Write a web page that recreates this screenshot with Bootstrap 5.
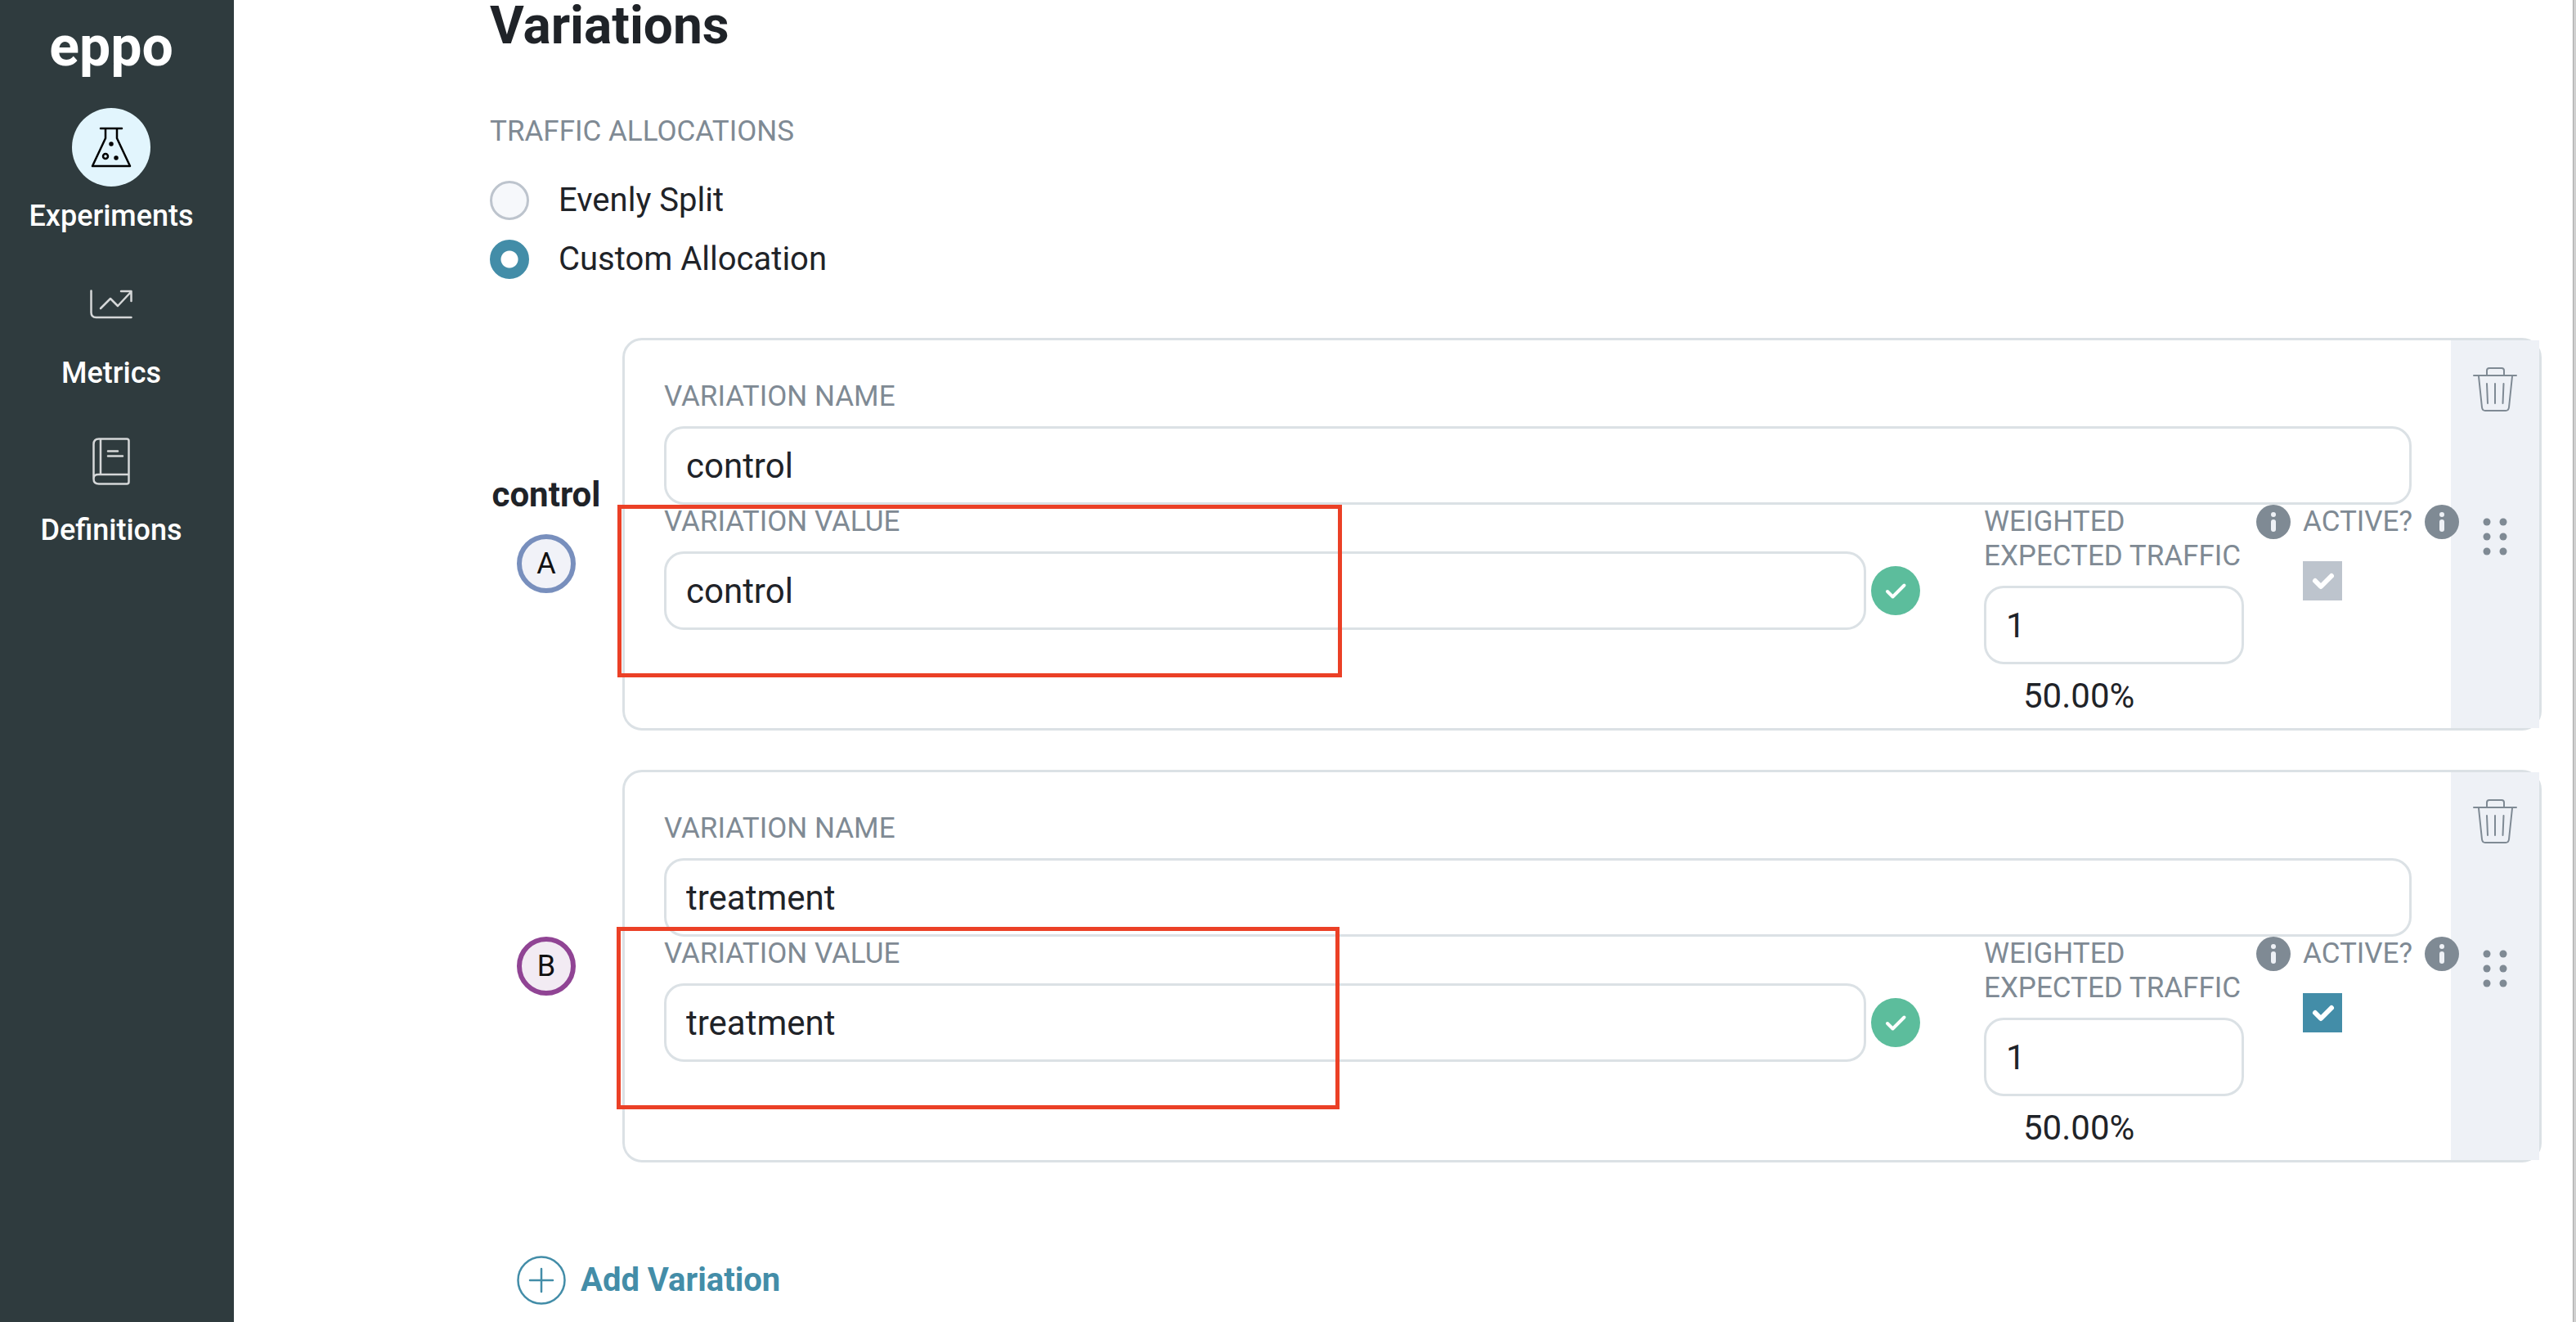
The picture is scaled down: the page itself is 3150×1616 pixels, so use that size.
<!DOCTYPE html>
<html lang="en">
<head>
<meta charset="utf-8">
<meta name="viewport" content="width=device-width, initial-scale=1">
<title>Eppo – Variations</title>
<link href="https://cdn.jsdelivr.net/npm/bootstrap@5.3.0/dist/css/bootstrap.min.css" rel="stylesheet">
<style>
  :root { --ink: #1f2328; --muted: #7f8a94; --line: #dbe1e5; --teal: #438da8; --panel: #eef1f6; --alert: #eb4026; }
  body { font-family: Roboto, "Liberation Sans", sans-serif; font-size: 40px; line-height: 48px; color: var(--ink); background: #fff; }
  .sidebar { flex: 0 0 286px; padding: 24px 14px 24px 0; background: #2f3b3e; }
  .brand { font-size: 68px; line-height: 66px; font-weight: 700; color: #fff; margin-bottom: 42px; }
  .side-nav { gap: 39px; }
  .side-link { gap: 15px; font-size: 36px; line-height: 42px; font-weight: 500; color: #fff; }
  .side-icon { width: 96px; height: 96px; }
  .side-link.active .side-icon { background: #e2f5fd; }
  .content { padding: 0 38px 21px 313px; min-width: 0; }
  .page-title { font-size: 64px; line-height: 64px; font-weight: 700; margin-bottom: 76px; }
  .caption { display: block; font-size: 35px; line-height: 42px; font-weight: 400; color: var(--muted); text-transform: uppercase; margin: 0; }
  .options { padding: 39px 0 72px; gap: 24px; }
  .option { gap: 36px; }
  .option .form-check-input { width: 48px; height: 48px; margin: 0; border: 3px solid #bdc4cd; background-color: #f6f8fb; }
  .option .form-check-input:checked { border-color: var(--teal); background: radial-gradient(circle, #fff 10px, var(--teal) 11px) border-box; }
  .variations { gap: 48px; }
  .tag { flex: 0 0 138px; margin-right: 24px; gap: 24px; font-size: 42px; font-weight: 700; }
  .letter { width: 72px; height: 72px; border: 6px solid; font-size: 36px; font-weight: 400; }
  .letter-a { border-color: #788fbd; background: #f1f2f8; }
  .letter-b { border-color: #904494; background: #f2ebf3; }
  .letter span { color: #111; }
  .variation { border: 3px solid var(--line); border-radius: 24px; min-width: 0; }
  .fields { padding: 48px 48px 15px; min-width: 0; }
  .fields .form-control { height: 96px; margin-top: 15px; padding: 0 24px; border: 3px solid var(--line); border-radius: 24px; font-size: 42px; line-height: 48px; color: var(--ink); }
  .value-col { margin-right: 78px; }
  .valid-row { gap: 6px; }
  .valid-row svg { flex: none; margin-top: 15px; }
  .weight-col { gap: 15px; margin-right: 15px; }
  .weight-field { width: 318px; }
  .share { margin-top: 15px; padding-left: 48px; font-size: 42px; }
  .active-col { width: 133px; z-index: 1; }
  .active-head { gap: 15px; width: max-content; }
  .active-col .form-check-input { display: block; width: 48px; height: 48px; margin: 27px 0 0; border: 0; border-radius: 0; opacity: 1; background-size: 48px 48px; }
  .active-col .form-check-input:checked { background-color: var(--teal); background-image: url("data:image/svg+xml,%3csvg xmlns='http://www.w3.org/2000/svg' viewBox='0 0 48 48'%3e%3cpath fill='none' stroke='%23fff' stroke-width='6' stroke-linecap='round' stroke-linejoin='round' d='M15 24l7 7 13-13'/%3e%3c/svg%3e"); }
  .active-col .form-check-input:disabled { background-color: #bdc4cd; }
  .handle { flex: 0 0 108px; background: var(--panel); padding-top: 30px; }
  .icon-btn { border: 0; background: none; padding: 0; display: block; line-height: 0; }
  .grip { margin-top: 127px; }
  .highlight { position: absolute; border: 5px solid var(--alert); pointer-events: none; z-index: 2; }
  .highlight-a { left: -9px; top: 201px; width: 886px; height: 211px; }
  .highlight-b { left: -10px; top: 189px; width: 884px; height: 223px; }
  .add-btn { margin: 114px 0 0 33px; gap: 18px; font-weight: 700; color: var(--teal); }
  .scroll-edge { flex: 0 0 4px; background: #d0d0d0; border-left: 1px solid #a8a8a8; }
</style>
<script src="https://cdn.jsdelivr.net/npm/bootstrap@5.3.0/dist/js/bootstrap.bundle.min.js"></script>
</head>
<body>
<svg class="d-none" aria-hidden="true">
  <symbol id="info" viewBox="0 0 42 42"><circle cx="21" cy="21" r="21" fill="#7f8a94"/><circle cx="21" cy="12" r="3" fill="#eef1f6"/><rect x="18" y="18" width="6" height="15" rx="3" fill="#eef1f6"/></symbol>
  <symbol id="valid" viewBox="0 0 60 60"><circle cx="30" cy="30" r="30" fill="#5cbd9c"/><path d="M20 31l6.500 6.500L40.500 23.500" fill="none" stroke="#fff" stroke-width="4" stroke-linecap="round" stroke-linejoin="round"/></symbol>
  <symbol id="trash" viewBox="0 0 54 54"><g fill="none" stroke="#7f8a94" stroke-width="2" stroke-linecap="round" stroke-linejoin="round"><path d="M1 10h52M17 10V4q0-3 3-3h15q3 0 3 3v6M7 11l4 38q.500 4 4 4h25q3.500 0 4-4l4-38M17 20l1 24M27 20v24M37.500 20l-1 24"/></g></symbol>
  <symbol id="dots" viewBox="0 0 30 46"><g fill="#7f8a94"><circle cx="5" cy="5" r="4.500"/><circle cx="25" cy="5" r="4.500"/><circle cx="5" cy="23" r="4.500"/><circle cx="25" cy="23" r="4.500"/><circle cx="5" cy="41" r="4.500"/><circle cx="25" cy="41" r="4.500"/></g></symbol>
</svg>

<div class="d-flex min-vh-100">
  <aside class="sidebar d-flex flex-column align-items-center">
    <a href="#" class="brand text-decoration-none">eppo</a>
    <nav class="side-nav d-flex flex-column align-items-center" aria-label="Main">
      <a href="#" class="side-link active d-flex flex-column align-items-center text-decoration-none" aria-current="page">
        <span class="side-icon rounded-circle d-flex align-items-center justify-content-center">
          <svg width="50" height="50" viewBox="0 0 50 50" fill="none" stroke="#000" stroke-width="2.500" stroke-linecap="round" stroke-linejoin="round"><path d="M12 2h26M18 2v12L2 48h46L32 14V2"/><circle cx="18" cy="36" r="3"/><circle cx="25" cy="21" r="1.500" fill="#000"/><circle cx="31" cy="38" r="1.500" fill="#000"/></svg>
        </span>
        <span>Experiments</span>
      </a>
      <a href="#" class="side-link d-flex flex-column align-items-center text-decoration-none">
        <span class="side-icon d-flex align-items-center justify-content-center">
          <svg width="52" height="36" viewBox="0 0 52 36" fill="none" stroke="#d5d7d8" stroke-width="2.500" stroke-linecap="round" stroke-linejoin="round"><path d="M1.500 1.500V28q0 6 6 6H50.500M13 23l12-12 9 9L50 3M38 2h12.500v12"/></svg>
        </span>
        <span>Metrics</span>
      </a>
      <a href="#" class="side-link d-flex flex-column align-items-center text-decoration-none">
        <span class="side-icon d-flex align-items-center justify-content-center">
          <svg width="46" height="58" viewBox="0 0 46 58" fill="none" stroke="#d5d7d8" stroke-width="2.500" stroke-linecap="round" stroke-linejoin="round"><path d="M1.500 50V8q0-6.500 6.500-6.500h34q2.500 0 2.500 2.500v50q0 2.500-2.500 2.500H8q-6.500 0-6.500-6T8 45h36.500M10 2v43M19 16.500h12M19 22.500h18"/></svg>
        </span>
        <span>Definitions</span>
      </a>
    </nav>
  </aside>

  <main class="content flex-grow-1">
    <h1 class="page-title">Variations</h1>

    <fieldset>
      <legend class="caption">Traffic allocations</legend>
      <div class="options d-flex flex-column">
        <div class="option d-flex align-items-center">
          <input class="form-check-input" type="radio" name="allocation" id="even">
          <label for="even">Evenly Split</label>
        </div>
        <div class="option d-flex align-items-center">
          <input class="form-check-input" type="radio" name="allocation" id="custom" checked>
          <label for="custom">Custom Allocation</label>
        </div>
      </div>
    </fieldset>

    <div class="variations d-flex flex-column">
      <section class="d-flex">
        <div class="tag d-flex flex-column align-items-center justify-content-center">
          <span>control</span>
          <div class="letter letter-a rounded-circle d-flex align-items-center justify-content-center"><span>A</span></div>
        </div>
        <div class="variation d-flex flex-grow-1 position-relative">
          <div class="fields flex-grow-1">
            <label class="caption" for="name-a">Variation name</label>
            <input class="form-control" id="name-a" type="text" value="control">
            <div class="d-flex align-items-start">
              <div class="value-col flex-grow-1">
                <label class="caption" for="value-a">Variation value</label>
                <div class="valid-row d-flex align-items-center">
                  <input class="form-control" id="value-a" type="text" value="control">
                  <svg width="60" height="60" role="img" aria-label="Valid"><use href="#valid"/></svg>
                </div>
              </div>
              <div class="weight-col d-flex flex-shrink-0">
                <div class="weight-field">
                  <label class="caption" for="weight-a">Weighted expected traffic</label>
                  <input class="form-control" id="weight-a" type="text" inputmode="numeric" value="1">
                  <div class="share">50.00%</div>
                </div>
                <button type="button" class="icon-btn align-self-start" aria-label="About weighted traffic"><svg width="42" height="42"><use href="#info"/></svg></button>
              </div>
              <div class="active-col flex-shrink-0 position-relative">
                <div class="active-head d-flex">
                  <label class="caption" for="active-a">Active?</label>
                  <button type="button" class="icon-btn" aria-label="About active"><svg width="42" height="42"><use href="#info"/></svg></button>
                </div>
                <input class="form-check-input" type="checkbox" id="active-a" checked disabled>
              </div>
            </div>
          </div>
          <div class="handle d-flex flex-column align-items-center">
            <button type="button" class="icon-btn" aria-label="Delete variation"><svg width="60" height="60" viewBox="-3 -3 60 60"><use href="#trash" width="54" height="54"/></svg></button>
            <button type="button" class="icon-btn grip" aria-label="Reorder variation"><svg width="30" height="46"><use href="#dots"/></svg></button>
          </div>
          <div class="highlight highlight-a"></div>
        </div>
      </section>

      <section class="d-flex">
        <div class="tag d-flex flex-column align-items-center justify-content-center">
          <div class="letter letter-b rounded-circle d-flex align-items-center justify-content-center"><span>B</span></div>
        </div>
        <div class="variation d-flex flex-grow-1 position-relative">
          <div class="fields flex-grow-1">
            <label class="caption" for="name-b">Variation name</label>
            <input class="form-control" id="name-b" type="text" value="treatment">
            <div class="d-flex align-items-start">
              <div class="value-col flex-grow-1">
                <label class="caption" for="value-b">Variation value</label>
                <div class="valid-row d-flex align-items-center">
                  <input class="form-control" id="value-b" type="text" value="treatment">
                  <svg width="60" height="60" role="img" aria-label="Valid"><use href="#valid"/></svg>
                </div>
              </div>
              <div class="weight-col d-flex flex-shrink-0">
                <div class="weight-field">
                  <label class="caption" for="weight-b">Weighted expected traffic</label>
                  <input class="form-control" id="weight-b" type="text" inputmode="numeric" value="1">
                  <div class="share">50.00%</div>
                </div>
                <button type="button" class="icon-btn align-self-start" aria-label="About weighted traffic"><svg width="42" height="42"><use href="#info"/></svg></button>
              </div>
              <div class="active-col flex-shrink-0 position-relative">
                <div class="active-head d-flex">
                  <label class="caption" for="active-b">Active?</label>
                  <button type="button" class="icon-btn" aria-label="About active"><svg width="42" height="42"><use href="#info"/></svg></button>
                </div>
                <input class="form-check-input" type="checkbox" id="active-b" checked>
              </div>
            </div>
          </div>
          <div class="handle d-flex flex-column align-items-center">
            <button type="button" class="icon-btn" aria-label="Delete variation"><svg width="60" height="60" viewBox="-3 -3 60 60"><use href="#trash" width="54" height="54"/></svg></button>
            <button type="button" class="icon-btn grip" aria-label="Reorder variation"><svg width="30" height="46"><use href="#dots"/></svg></button>
          </div>
          <div class="highlight highlight-b"></div>
        </div>
      </section>
    </div>

    <button type="button" class="icon-btn add-btn d-flex align-items-center">
      <svg width="60" height="60" viewBox="0 0 60 60" fill="none" stroke="currentColor" stroke-width="2.500" stroke-linecap="round"><circle cx="30" cy="30" r="28.500"/><path d="M30 16v28M16 30h28"/></svg>
      <span>Add Variation</span>
    </button>
  </main>
  <div class="scroll-edge"></div>
</div>
</body>
</html>
